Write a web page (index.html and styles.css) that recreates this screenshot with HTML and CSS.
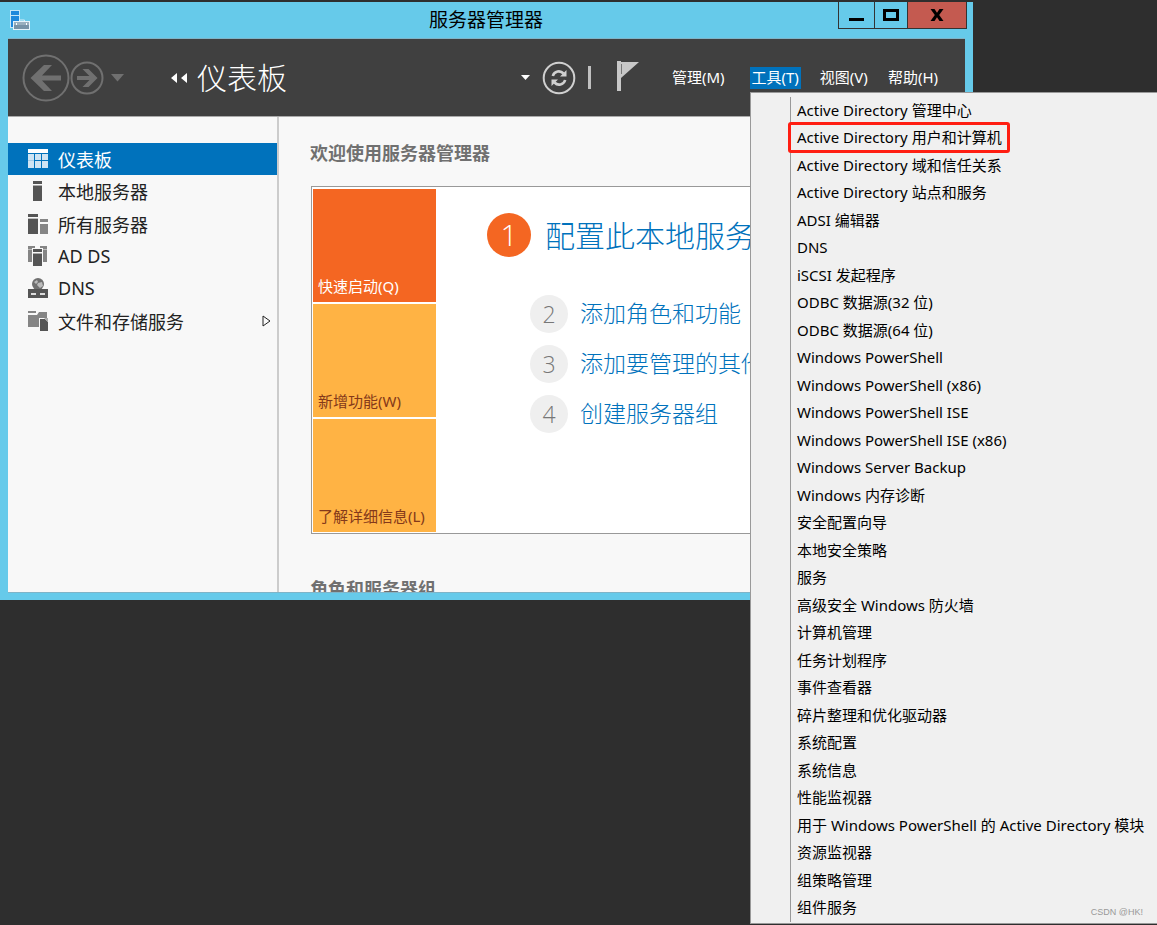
FILE: index.html
```html
<!DOCTYPE html>
<html lang="zh-CN">
<head>
<meta charset="utf-8">
<title>服务器管理器</title>
<link rel="stylesheet" href="styles.css">
</head>
<body class="desktop">
<div class="window">
  <header class="titlebar">
    <svg class="app-icon" width="20" height="20" viewBox="0 0 20 20">
      <rect x=".5" y=".5" width="9" height="17" fill="#1e88dc" stroke="#c5e6f8"/>
      <path d="M1 5.500h8" stroke="#c5e6f8"/>
      <path d="M9.500 12v-2h5v2" fill="none" stroke="#d9eef8"/>
      <rect x="3.500" y="11.500" width="16" height="8" fill="#7893a7" stroke="#e6f3fa"/>
      <rect x="4" y="12" width="15" height="3" fill="#9ab0bf"/>
      <path d="M6.500 13v2M16.500 13v2" stroke="#fff"/>
    </svg>
    <h1 class="title">服务器管理器</h1>
    <div class="controls">
      <button class="control minimize" aria-label="最小化"><svg width="16" height="14" viewBox="0 0 16 14"><path d="M0 11.500h15" stroke="#000" stroke-width="3"/></svg></button>
      <button class="control maximize" aria-label="最大化"><svg width="16" height="14" viewBox="0 0 16 14"><rect x="1.500" y="2.500" width="13" height="9" fill="none" stroke="#000" stroke-width="3"/></svg></button>
      <button class="control close" aria-label="关闭"><svg width="14" height="14" viewBox="0 0 14 14"><path d="M.5 1h4L7 4.800 9.500 1h4L9.200 7l4.300 6h-4L7 9.200 4.500 13h-4l4.300-6z"/></svg></button>
    </div>
  </header>
  <div class="frame">
    <div class="toolbar">
      <div class="nav">
        <button class="icon-button" aria-label="后退"><svg width="48" height="48" viewBox="0 0 48 48"><circle cx="24" cy="24" r="22.500" fill="none" stroke="#707070" stroke-width="2"/><path d="M8.500 24 22 11h8L20 21.500h19v5H20L30 37h-8z" fill="#707070"/></svg></button>
        <button class="icon-button" aria-label="前进"><svg width="34" height="34" viewBox="0 0 34 34"><circle cx="17" cy="17" r="15.500" fill="none" stroke="#707070" stroke-width="2"/><path d="M27.500 17 18.500 8h-6l7 7H7v4h12.500l-7 7h6z" fill="#707070"/></svg></button>
        <button class="icon-button history" aria-label="历史记录"><svg width="14" height="8" viewBox="0 0 14 8"><path d="M0 0h13L6.500 7.500z" fill="#707070"/></svg></button>
      </div>
      <svg class="crumb" width="16" height="10" viewBox="0 0 16 10"><path d="M6 0v10L0 5zM16 0v10l-6-5z" fill="#fff"/></svg>
      <h2 class="page-title">仪表板</h2>
      <button class="icon-button drop" aria-label="更多"><svg width="9" height="5" viewBox="0 0 9 5"><path d="M0 0h9L4.500 5z" fill="#fff"/></svg></button>
      <button class="icon-button" aria-label="刷新"><svg width="34" height="34" viewBox="0 0 34 34"><circle cx="17" cy="17" r="15.300" fill="none" stroke="#d0d0d0" stroke-width="2"/><path d="M10.800 15c1.500-5 7.500-6 10.700-2.500M23.200 19c-1.500 5-7.500 6-10.700 2.500" fill="none" stroke="#d0d0d0" stroke-width="2.600"/><path d="M24.500 9v6.500H18zM9.500 25v-6.500H16z" fill="#d0d0d0"/></svg></button>
      <span class="divider"></span>
      <button class="icon-button flag" aria-label="通知"><svg width="22" height="30" viewBox="0 0 22 30"><path d="M0 0h4v1h18L4 17v13H0z" fill="#c8c8c8"/><path d="M4.500 3v10" stroke="#777"/></svg></button>
      <nav class="menubar">
        <button class="menu-title">管理(M)</button>
        <button class="menu-title active" aria-haspopup="menu" aria-expanded="true">工具(T)</button>
        <button class="menu-title">视图(V)</button>
        <button class="menu-title">帮助(H)</button>
      </nav>
    </div>
    <div class="content">
      <nav class="sidebar">
        <a class="side-item selected" href="#"><svg width="20" height="20" viewBox="0 0 20 20"><path d="M0 0h20v4H0z" fill="#fff"/><path d="M0 5h6v14H0zM7 5h6v6H7zM14 5h6v6h-6zM7 12h6v7H7zM14 12h6v7h-6z" fill="#cfe4f3"/><path d="M0 11.500h6" stroke="#a5cce8"/></svg>仪表板</a>
        <a class="side-item" href="#"><svg width="20" height="20" viewBox="0 0 20 20"><path d="M5 0h9v3H5zM5 5h9v15H5z" fill="#555"/><path d="M5 4.500h9" stroke="#aaa"/></svg>本地服务器</a>
        <a class="side-item" href="#"><svg width="20" height="20" viewBox="0 0 20 20"><path d="M0 0h10v3H0zM0 5h10v15H0z" fill="#555"/><path d="M0 4.500h10" stroke="#bbb"/><path d="M12 5h8v3h-8zM12 10h8v10h-8z" fill="#858585"/></svg>所有服务器</a>
        <a class="side-item" href="#"><svg width="20" height="20" viewBox="0 0 20 20"><path d="M0 0h7v2H4v14H0zM12 0h7v16h-4V2h-3z" fill="#858585"/><path d="M0 3.500h4M15 3.500h4" stroke="#bbb"/><path d="M5 3h9v3H5zM5 8h9v12H5z" fill="#555"/><path d="M5 7.500h9" stroke="#aaa"/></svg>AD DS</a>
        <a class="side-item" href="#"><svg width="20" height="20" viewBox="0 0 20 20"><circle cx="10" cy="6" r="6" fill="#707070"/><path d="M6 4l3-2 1 2-2 2zM10 5l4-1 1 4-3 2-3-3z" fill="#bbb"/><path d="M0 11h20v9H0z" fill="#555"/><path d="M3 16h5M12 16h5" stroke="#ddd" stroke-width="2"/></svg>DNS</a>
        <a class="side-item" href="#"><svg width="20" height="20" viewBox="0 0 20 20"><path d="M0 0h8v2H0zM0 4h9l2-3h8v6h-8v9H0z" fill="#858585"/><path d="M12 8h5l3 3v9h-8z" fill="#555"/><path d="M16 7h4v4z" fill="#aaa"/></svg>文件和存储服务<svg class="expand" width="9" height="12" viewBox="0 0 9 12"><path d="M1 1v10l7-5z" fill="none" stroke="#222"/></svg></a>
      </nav>
      <main class="main">
        <h3 class="section-title">欢迎使用服务器管理器</h3>
        <section class="welcome">
          <div class="tiles">
            <button class="tile current">快速启动(Q)</button>
            <button class="tile">新增功能(W)</button>
            <button class="tile">了解详细信息(L)</button>
          </div>
          <ol class="steps">
            <li class="step primary"><span class="number">1</span><a href="#">配置此本地服务器</a></li>
            <li class="step"><span class="number">2</span><a href="#">添加角色和功能</a></li>
            <li class="step"><span class="number">3</span><a href="#">添加要管理的其他服务器</a></li>
            <li class="step"><span class="number">4</span><a href="#">创建服务器组</a></li>
          </ol>
        </section>
        <h3 class="section-title">角色和服务器组</h3>
      </main>
    </div>
  </div>
</div>
<div class="menu" role="menu" aria-label="工具">
  <div class="menu-list">
    <button class="menu-item" role="menuitem">Active Directory 管理中心</button>
    <button class="menu-item marked" role="menuitem">Active Directory 用户和计算机</button>
    <button class="menu-item" role="menuitem">Active Directory 域和信任关系</button>
    <button class="menu-item" role="menuitem">Active Directory 站点和服务</button>
    <button class="menu-item" role="menuitem">ADSI 编辑器</button>
    <button class="menu-item" role="menuitem">DNS</button>
    <button class="menu-item" role="menuitem">iSCSI 发起程序</button>
    <button class="menu-item" role="menuitem">ODBC 数据源(32 位)</button>
    <button class="menu-item" role="menuitem">ODBC 数据源(64 位)</button>
    <button class="menu-item" role="menuitem">Windows PowerShell</button>
    <button class="menu-item" role="menuitem">Windows PowerShell (x86)</button>
    <button class="menu-item" role="menuitem">Windows PowerShell ISE</button>
    <button class="menu-item" role="menuitem">Windows PowerShell ISE (x86)</button>
    <button class="menu-item" role="menuitem">Windows Server Backup</button>
    <button class="menu-item" role="menuitem">Windows 内存诊断</button>
    <button class="menu-item" role="menuitem">安全配置向导</button>
    <button class="menu-item" role="menuitem">本地安全策略</button>
    <button class="menu-item" role="menuitem">服务</button>
    <button class="menu-item" role="menuitem">高级安全 Windows 防火墙</button>
    <button class="menu-item" role="menuitem">计算机管理</button>
    <button class="menu-item" role="menuitem">任务计划程序</button>
    <button class="menu-item" role="menuitem">事件查看器</button>
    <button class="menu-item" role="menuitem">碎片整理和优化驱动器</button>
    <button class="menu-item" role="menuitem">系统配置</button>
    <button class="menu-item" role="menuitem">系统信息</button>
    <button class="menu-item" role="menuitem">性能监视器</button>
    <button class="menu-item" role="menuitem">用于 Windows PowerShell 的 Active Directory 模块</button>
    <button class="menu-item" role="menuitem">资源监视器</button>
    <button class="menu-item" role="menuitem">组策略管理</button>
    <button class="menu-item" role="menuitem">组件服务</button>
  </div>
</div>
<span class="watermark">CSDN @HK!</span>
</body>
</html>
```
FILE: styles.css
```css
* {
  box-sizing: border-box;
}

h1, h2, h3, ol {
  margin: 0;
  padding: 0;
  font-weight: 400;
}

button {
  margin: 0;
  padding: 0;
  border: 0;
  background: none;
  color: inherit;
  font: inherit;
}

a {
  color: inherit;
  text-decoration: none;
}

svg {
  display: block;
  flex: none;
}

.desktop {
  position: relative;
  height: 100vh;
  min-height: 925px;
  margin: 0;
  padding: 2px 184px 325px 0;
  overflow: hidden;
  background: #2e2e2e;
  font-family: "Noto Sans", "Noto Sans CJK SC", sans-serif;
  font-size: 15px;
  white-space: nowrap;
}

.window {
  display: flex;
  flex-direction: column;
  height: 100%;
  padding: 0 8px 7px;
  background: #66caea;
}

.titlebar {
  display: grid;
  grid-template-columns: 126px 1fr 129px;
  height: 36px;
  margin-right: -2px;
}

.app-icon {
  margin: 8px 2px;
}

.title {
  font-size: 19px;
  line-height: 36px;
  text-align: center;
}

.controls {
  display: flex;
  height: 27px;
  border: 1px solid #333;
  border-top: 0;
}

.control {
  display: flex;
  align-items: center;
  justify-content: center;
}

.minimize {
  width: 35px;
}

.maximize {
  width: 34px;
  border: solid #333;
  border-width: 0 1px;
}

.close {
  flex: 1;
  background: #c45a50;
}

.frame {
  display: flex;
  flex: 1;
  flex-direction: column;
  min-height: 0;
  border: solid #7fb4c8;
  border-width: 1px 0;
}

.toolbar {
  display: flex;
  align-items: center;
  height: 78px;
  padding: 0 26px 0 14px;
  border-bottom: 1px solid #aaa;
  background: #404040;
  color: #fff;
}

.nav {
  display: flex;
  align-items: center;
}

.icon-button {
  flex: none;
}

.nav .history {
  margin-left: 7px;
}

.crumb {
  margin: 0 10px 0 46px;
}

.page-title {
  flex: 1;
  font-size: 30px;
  font-weight: 300;
  line-height: 40px;
}

.drop {
  margin-right: 12px;
}

.divider {
  width: 3px;
  height: 23px;
  margin: 0 26px 0 12px;
  background: #c0c0c0;
}

.flag {
  margin-bottom: 4px;
}

.menubar {
  display: flex;
  gap: 18px;
  margin-left: 32px;
}

.menu-title {
  height: 22px;
  padding: 0 1px 2px;
  line-height: 20px;
}

.menu-title.active {
  margin-left: 6px;
  padding: 0 2px 2px;
  background: #0072bc;
}

.content {
  display: flex;
  flex: 1;
  min-height: 0;
  background: #f8f8f8;
}

.sidebar {
  display: grid;
  flex: none;
  grid-auto-rows: 1fr;
  width: 271px;
  min-height: 100%;
  padding: 26px 0 255px;
  border-right: 2px solid #ccc;
}

.side-item {
  display: flex;
  align-items: center;
  gap: 10px;
  padding: 0 6px 0 20px;
  color: #222;
  font-size: 18px;
}

.side-item.selected {
  background: #0072bc;
  color: #fff;
}

.expand {
  margin-left: auto;
}

.main {
  flex: 1;
  min-width: 0;
  padding: 24px 8px 0 31px;
  overflow: hidden;
}

.section-title {
  color: #707070;
  font-size: 18px;
  font-weight: 700;
  line-height: 24px;
}

.welcome {
  display: flex;
  margin: 21px 0 43px 1px;
  border: 1px solid #999;
  background: #fff;
}

.tiles {
  display: grid;
  flex: none;
  gap: 2px;
  width: 124px;
  padding: 2px 0 1px 1px;
}

.tile {
  display: flex;
  align-items: flex-end;
  height: 113px;
  padding: 0 5px 6px;
  background: #ffb344;
  color: #84391a;
  line-height: 20px;
}

.tile.current {
  background: #f46622;
  color: #fff;
}

.steps {
  padding: 26px 0 0 51px;
  list-style: none;
}

.step {
  display: flex;
  align-items: center;
  gap: 12px;
  height: 38px;
  margin: 0 0 12px 43px;
  color: #0072bc;
  font-size: 23px;
  font-weight: 300;
  line-height: 36px;
}

.step a {
  padding-bottom: 2px;
}

.number {
  flex: none;
  width: 38px;
  border-radius: 50%;
  background: #efefef;
  color: #777;
  font-family: "Open Sans", sans-serif;
  line-height: 38px;
  text-align: center;
}

.primary {
  gap: 14px;
  height: 44px;
  margin: 0 0 38px;
  font-size: 30px;
}

.primary a {
  padding: 2px 0 0;
}

.primary .number {
  width: 44px;
  background: #f46622;
  color: #fff;
  line-height: 44px;
}

.menu {
  position: absolute;
  top: 92px;
  right: 0;
  bottom: 1px;
  width: 407px;
  padding: 4px 0 1px 39px;
  border: solid #999;
  border-width: 1px 0 1px 1px;
  background: #f0f0f0;
}

.menu-list {
  display: grid;
  grid-auto-rows: 1fr;
  height: 100%;
  border-left: 1px solid #999;
}

.menu-item {
  justify-self: start;
  padding: 0 0 2px 6px;
  line-height: 20px;
}

.marked {
  margin: -3px 0 -1px -3px;
  padding: 0 5px 0 6px;
  border: 3px solid #ff1e12;
  border-radius: 3px;
}

.watermark {
  position: absolute;
  right: 14px;
  bottom: 8px;
  color: #999;
  font-family: "Liberation Sans", sans-serif;
  font-size: 9px;
}
```
